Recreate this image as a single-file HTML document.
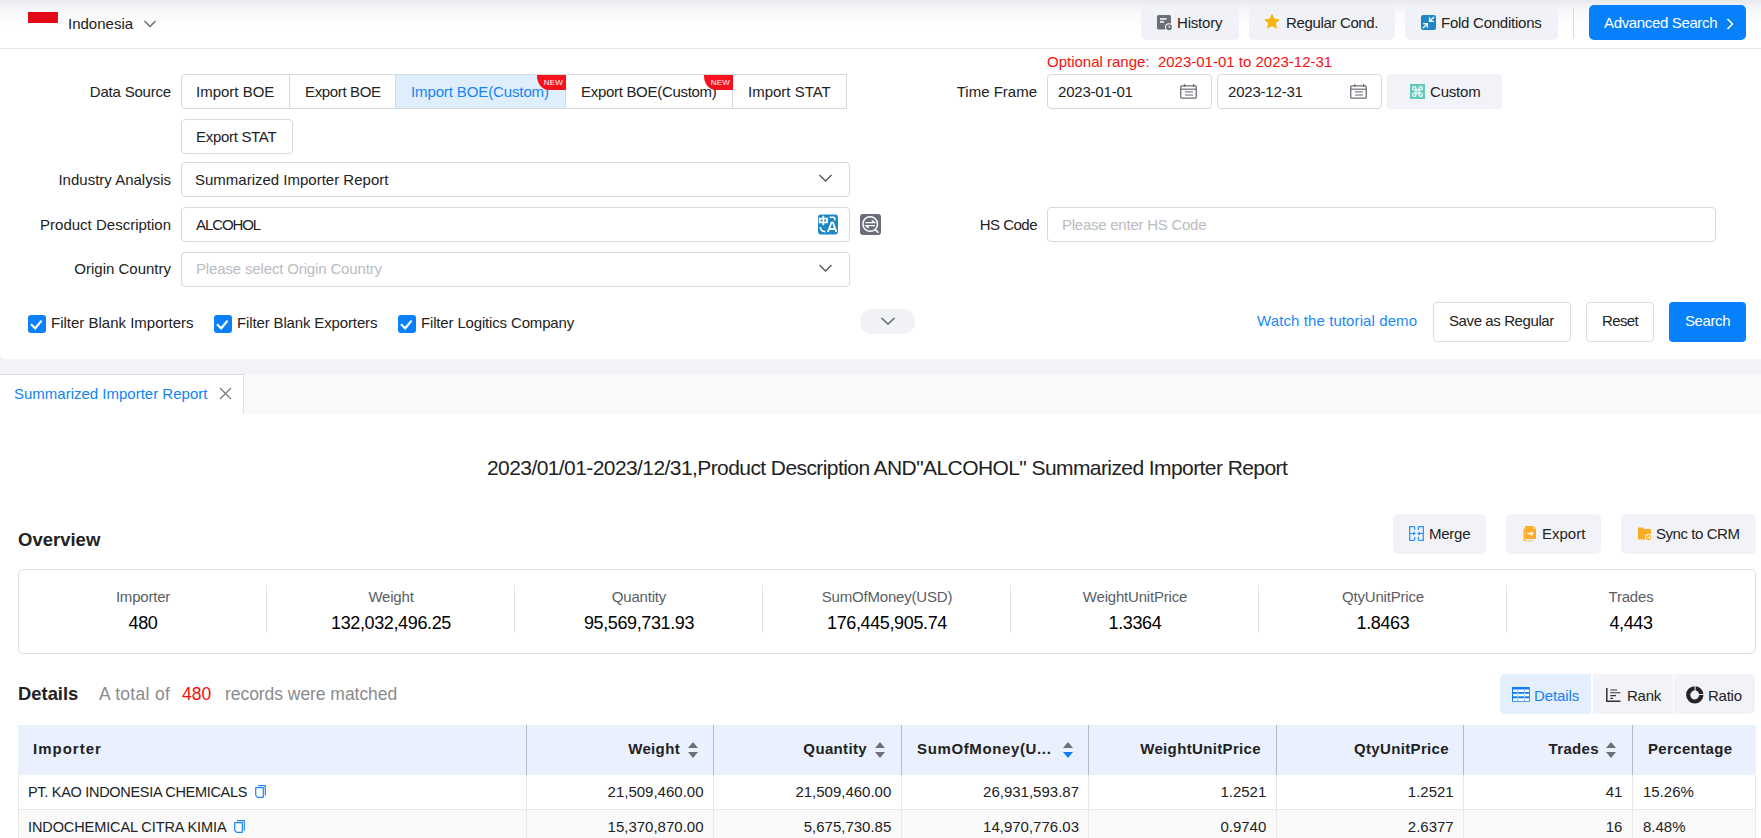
<!DOCTYPE html>
<html><head><meta charset="utf-8">
<style>
*{box-sizing:border-box;margin:0;padding:0}
html,body{width:1761px;height:838px;overflow:hidden;background:#fff;font-family:"Liberation Sans",sans-serif;color:#222}
.a{position:absolute}
.t{position:absolute;white-space:nowrap;line-height:20px;font-size:15px}
#hdr{left:0;top:0;width:1761px;height:49px;background:linear-gradient(#e8e9ed 0px,#f3f4f6 7px,#f9fafb 14px,#fdfdfd 22px,#fff 30px);border-bottom:1px solid #e8e8e8}
.hbtn{position:absolute;top:5px;height:35px;background:#f0f2f7;border-radius:5px}
.btn{position:absolute;border:1px solid #d9dce2;border-radius:4px;background:#fff}
.inp{position:absolute;border:1px solid #d6d9de;border-radius:4px;background:#fff}
.ds{position:absolute;top:74px;height:35px;border:1px solid #d6d9de;background:#fff}
.new{position:absolute;top:0px;right:-1px;width:29px;height:15px;background:#f5121d;border-bottom-left-radius:12px 14px;color:#fff;font-size:8px;line-height:15px;text-align:right;padding-right:3px;letter-spacing:.2px;z-index:2}
.lbl{position:absolute;white-space:nowrap;line-height:20px;font-size:15px;text-align:right;width:200px}
.cb{position:absolute;width:18px;height:18px;background:#0a80fb;border-radius:3px;top:315px}
.gbtn{position:absolute;top:514px;height:40px;background:#f1f3f8;border-radius:5px}
.ov{position:absolute;top:569px;height:85px;left:18px;width:1738px;border:1px solid #dcdfe5;border-radius:5px}
.ovc{position:absolute;top:0;width:248px;height:83px;text-align:center}
.ovd{position:absolute;top:16px;width:1px;height:48px;background:#dfe2e7}
.th{position:absolute;top:725px;height:50px;background:#eaf0fd}
.tl{position:absolute;font-weight:bold;font-size:15px;line-height:20px;top:739px;white-space:nowrap}
.td{position:absolute;font-size:15px;line-height:20px;white-space:nowrap}
.tn{font-size:14.5px;letter-spacing:-.3px}
</style></head><body>

<!-- HEADER -->
<div id="hdr" class="a"></div>
<div class="a" style="left:28px;top:12px;width:30px;height:11px;background:#e20a17"></div>
<div class="t" id="t_indo" style="left:68px;top:14px">Indonesia</div>
<svg class="a" style="left:143px;top:19px" width="14" height="10" viewBox="0 0 14 10"><path d="M1.5 2 L7 7.5 L12.5 2" fill="none" stroke="#666" stroke-width="1.3"/></svg>

<div class="hbtn" style="left:1141px;width:98px"></div>
<div class="hbtn" style="left:1249px;width:146px"></div>
<div class="hbtn" style="left:1405px;width:153px"></div>
<div class="a" style="left:1573px;top:8px;width:1px;height:30px;background:#d8dbe0"></div>
<div class="a" style="left:1589px;top:5px;width:157px;height:35px;background:#0780fc;border-radius:5px"></div>
<div class="t" id="t_hist" style="left:1177px;top:13px;letter-spacing:-.2px">History</div>
<div class="t" id="t_reg" style="left:1286px;top:13px;letter-spacing:-.35px">Regular Cond.</div>
<div class="t" id="t_fold" style="left:1441px;top:13px;letter-spacing:-.25px">Fold Conditions</div>
<div class="t" id="t_adv" style="left:1604px;top:13px;color:#fff;letter-spacing:-.35px">Advanced Search</div>

<!-- FORM -->
<div class="lbl" id="l_ds" style="left:-29px;top:82px;letter-spacing:-.2px">Data Source</div>
<div class="ds" style="left:181px;width:109px;border-radius:4px 0 0 4px"></div>
<div class="ds" style="left:289px;width:107px"></div>
<div class="ds" style="left:395px;width:171px;background:#deeefb;border-color:#d6d9de"><div class="new">NEW</div></div>
<div class="ds" style="left:565px;width:168px"><div class="new">NEW</div></div>
<div class="ds" style="left:732px;width:115px"></div>
<div class="ds" style="left:181px;top:119px;width:112px;border-radius:4px"></div>
<div class="t" id="t_ib" style="left:196px;top:82px">Import BOE</div>
<div class="t" id="t_eb" style="left:305px;top:82px;letter-spacing:-.35px">Export BOE</div>
<div class="t" id="t_ibc" style="left:411px;top:82px;color:#1585f6;letter-spacing:-.12px">Import BOE(Custom)</div>
<div class="t" id="t_ebc" style="left:581px;top:82px;letter-spacing:-.3px">Export BOE(Custom)</div>
<div class="t" id="t_is" style="left:748px;top:82px">Import STAT</div>
<div class="t" id="t_es" style="left:196px;top:127px;letter-spacing:-.3px">Export STAT</div>

<div class="t" id="t_opt" style="left:1047px;top:52px;color:#fa0f0f">Optional range:&nbsp;&nbsp;2023-01-01 to 2023-12-31</div>
<div class="lbl" id="l_tf" style="left:837px;top:82px">Time Frame</div>
<div class="inp" style="left:1047px;top:74px;width:165px;height:35px"></div>
<div class="inp" style="left:1217px;top:74px;width:165px;height:35px"></div>
<div class="t" id="t_d1" style="left:1058px;top:82px;letter-spacing:-.2px">2023-01-01</div>
<div class="t" id="t_d2" style="left:1228px;top:82px;letter-spacing:-.2px">2023-12-31</div>
<div class="a" style="left:1387px;top:74px;width:115px;height:35px;background:#f1f3f8;border-radius:3px"></div>
<div class="t" id="t_cus" style="left:1430px;top:82px;letter-spacing:-.2px">Custom</div>

<div class="lbl" id="l_ia" style="left:-29px;top:170px">Industry Analysis</div>
<div class="inp" style="left:181px;top:162px;width:669px;height:35px"></div>
<div class="t" id="t_ia" style="left:195px;top:170px">Summarized Importer Report</div>
<svg class="a" style="left:818px;top:173px" width="15" height="10" viewBox="0 0 15 10"><path d="M1.5 2 L7.5 8 L13.5 2" fill="none" stroke="#555" stroke-width="1.3"/></svg>

<div class="lbl" id="l_pd" style="left:-29px;top:215px">Product Description</div>
<div class="inp" style="left:181px;top:207px;width:669px;height:35px"></div>
<div class="t" id="t_pd" style="left:196px;top:215px;letter-spacing:-1.1px">ALCOHOL</div>

<div class="lbl" id="l_oc" style="left:-29px;top:259px">Origin Country</div>
<div class="inp" style="left:181px;top:252px;width:669px;height:35px"></div>
<div class="t" id="t_oc" style="left:196px;top:259px;letter-spacing:-.15px;color:#b9bcc2">Please select Origin Country</div>
<svg class="a" style="left:818px;top:263px" width="15" height="10" viewBox="0 0 15 10"><path d="M1.5 2 L7.5 8 L13.5 2" fill="none" stroke="#555" stroke-width="1.3"/></svg>

<div class="lbl" id="l_hs" style="left:837px;top:215px;letter-spacing:-.5px">HS Code</div>
<div class="inp" style="left:1047px;top:207px;width:669px;height:35px"></div>
<div class="t" id="t_hs" style="left:1062px;top:215px;letter-spacing:-.25px;color:#b9bcc2">Please enter HS Code</div>

<div class="cb" style="left:28px"></div>
<div class="cb" style="left:214px"></div>
<div class="cb" style="left:398px"></div>
<div class="t" id="t_cb1" style="left:51px;top:313px">Filter Blank Importers</div>
<div class="t" id="t_cb2" style="left:237px;top:313px;letter-spacing:-.14px">Filter Blank Exporters</div>
<div class="t" id="t_cb3" style="left:421px;top:313px;letter-spacing:-.16px">Filter Logitics Company</div>
<div class="a" style="left:860px;top:309px;width:55px;height:25px;background:#f0f2f6;border-radius:12px"></div>

<div class="t" id="t_watch" style="left:1257px;top:311px;letter-spacing:.1px;color:#1a88fa">Watch the tutorial demo</div>
<div class="btn" style="left:1433px;top:302px;width:138px;height:40px"></div>
<div class="btn" style="left:1586px;top:302px;width:68px;height:40px"></div>
<div class="a" style="left:1669px;top:302px;width:77px;height:40px;background:#0780fc;border-radius:4px"></div>
<div class="t" id="t_save" style="left:1449px;top:311px;letter-spacing:-.4px">Save as Regular</div>
<div class="t" id="t_reset" style="left:1602px;top:311px;letter-spacing:-.6px">Reset</div>
<div class="t" id="t_search" style="left:1685px;top:311px;letter-spacing:-.4px;color:#fff">Search</div>

<!-- BAND / TABS -->
<div class="a" style="left:0;top:359px;width:1761px;height:16px;background:#f1f3f8"></div>
<div class="a" style="left:0;top:352px;width:12px;height:7px;background:#f1f3f8"></div><div class="a" style="left:0;top:349px;width:14px;height:10px;background:#fff;border-bottom-left-radius:5px"></div>
<div class="a" style="left:0;top:374px;width:1761px;height:40px;background:#f9f9f9"></div>
<div class="a" style="left:0;top:374px;width:244px;height:40px;background:#fff;border-top:1px solid #dcdfe4;border-right:1px solid #dcdfe4"></div>
<div class="t" id="t_tab" style="left:14px;top:384px;color:#0f84f8">Summarized Importer Report</div>

<!-- REPORT -->
<div class="t" id="t_title" style="left:487px;top:456px;font-size:21px;line-height:24px;letter-spacing:-.58px">2023/01/01-2023/12/31,Product Description AND"ALCOHOL" Summarized Importer Report</div>
<div class="t" id="t_ovw" style="left:18px;top:529px;font-size:18.5px;line-height:22px;font-weight:bold">Overview</div>
<div class="gbtn" style="left:1393px;width:93px"></div>
<div class="gbtn" style="left:1506px;width:95px"></div>
<div class="gbtn" style="left:1621px;width:135px"></div>
<div class="t" id="t_merge" style="left:1429px;top:524px;letter-spacing:-.26px">Merge</div>
<div class="t" id="t_export" style="left:1542px;top:524px">Export</div>
<div class="t" id="t_sync" style="left:1656px;top:524px;letter-spacing:-.44px">Sync to CRM</div>

<div class="ov"></div>
<div class="t" style="left:19px;width:248px;text-align:center;top:587px;color:#5a5e65;letter-spacing:-.2px">Importer</div>
<div class="t" style="left:19px;width:248px;text-align:center;top:613px;font-size:18px;letter-spacing:-.38px;color:#000">480</div>
<div class="t" style="left:267px;width:248px;text-align:center;top:587px;color:#5a5e65;letter-spacing:-.2px">Weight</div>
<div class="t" style="left:267px;width:248px;text-align:center;top:613px;font-size:18px;letter-spacing:-.38px;color:#000">132,032,496.25</div>
<div class="ovd" style="left:266px;top:585px"></div>
<div class="t" style="left:515px;width:248px;text-align:center;top:587px;color:#5a5e65;letter-spacing:-.2px">Quantity</div>
<div class="t" style="left:515px;width:248px;text-align:center;top:613px;font-size:18px;letter-spacing:-.38px;color:#000">95,569,731.93</div>
<div class="ovd" style="left:514px;top:585px"></div>
<div class="t" style="left:763px;width:248px;text-align:center;top:587px;color:#5a5e65;letter-spacing:-.2px">SumOfMoney(USD)</div>
<div class="t" style="left:763px;width:248px;text-align:center;top:613px;font-size:18px;letter-spacing:-.38px;color:#000">176,445,905.74</div>
<div class="ovd" style="left:762px;top:585px"></div>
<div class="t" style="left:1011px;width:248px;text-align:center;top:587px;color:#5a5e65;letter-spacing:-.2px">WeightUnitPrice</div>
<div class="t" style="left:1011px;width:248px;text-align:center;top:613px;font-size:18px;letter-spacing:-.38px;color:#000">1.3364</div>
<div class="ovd" style="left:1010px;top:585px"></div>
<div class="t" style="left:1259px;width:248px;text-align:center;top:587px;color:#5a5e65;letter-spacing:-.2px">QtyUnitPrice</div>
<div class="t" style="left:1259px;width:248px;text-align:center;top:613px;font-size:18px;letter-spacing:-.38px;color:#000">1.8463</div>
<div class="ovd" style="left:1258px;top:585px"></div>
<div class="t" style="left:1507px;width:248px;text-align:center;top:587px;color:#5a5e65;letter-spacing:-.2px">Trades</div>
<div class="t" style="left:1507px;width:248px;text-align:center;top:613px;font-size:18px;letter-spacing:-.38px;color:#000">4,443</div>
<div class="ovd" style="left:1506px;top:585px"></div>

<div class="t" id="t_det" style="left:18px;top:683px;font-size:18.4px;line-height:22px;font-weight:bold">Details</div>
<div class="t" id="t_tot" style="left:99px;top:683px;font-size:17.5px;line-height:22px;color:#8a8b8e;letter-spacing:.3px">A total of</div>
<div class="t" id="t_480" style="left:182px;top:683px;font-size:17.5px;line-height:22px;color:#fa0a0a">480</div>
<div class="t" id="t_rec" style="left:225px;top:683px;font-size:17.5px;line-height:22px;color:#8a8b8e;letter-spacing:-.05px">records were matched</div>

<div class="a" style="left:1500px;top:674px;width:91px;height:40px;background:#e3effc;border-radius:5px 0 0 5px"></div>
<div class="a" style="left:1593px;top:674px;width:80px;height:40px;background:#f1f3f8"></div>
<div class="a" style="left:1674px;top:674px;width:81px;height:40px;background:#f1f3f8;border-radius:0 5px 5px 0"></div>
<div class="t" id="t_dd" style="left:1534px;top:686px;letter-spacing:-.11px;color:#1a80f0">Details</div>
<div class="t" id="t_rank" style="left:1627px;top:686px;letter-spacing:-.25px">Rank</div>
<div class="t" id="t_ratio" style="left:1708px;top:686px;letter-spacing:-.24px">Ratio</div>

<!-- TABLE -->
<div class="a" style="left:18px;top:725px;width:1738px;height:50px;background:#eaf0fd"></div>
<div class="a" style="left:18px;top:810px;width:1738px;height:28px;background:#fafafa"></div>
<div class="a" style="left:18px;top:809px;width:1738px;height:1px;background:#e8e8e8"></div>
<div class="a" style="left:18px;top:775px;width:1px;height:63px;background:#e8e8e8"></div>
<div class="a" style="left:1755px;top:775px;width:1px;height:63px;background:#e8e8e8"></div>
<div class="a" style="left:526px;top:725px;width:1px;height:50px;background:#b6bac4"></div>
<div class="a" style="left:526px;top:775px;width:1px;height:63px;background:#e8e8e8"></div>
<div class="a" style="left:713px;top:725px;width:1px;height:50px;background:#b6bac4"></div>
<div class="a" style="left:713px;top:775px;width:1px;height:63px;background:#e8e8e8"></div>
<div class="a" style="left:901px;top:725px;width:1px;height:50px;background:#b6bac4"></div>
<div class="a" style="left:901px;top:775px;width:1px;height:63px;background:#e8e8e8"></div>
<div class="a" style="left:1088px;top:725px;width:1px;height:50px;background:#b6bac4"></div>
<div class="a" style="left:1088px;top:775px;width:1px;height:63px;background:#e8e8e8"></div>
<div class="a" style="left:1276px;top:725px;width:1px;height:50px;background:#b6bac4"></div>
<div class="a" style="left:1276px;top:775px;width:1px;height:63px;background:#e8e8e8"></div>
<div class="a" style="left:1463px;top:725px;width:1px;height:50px;background:#b6bac4"></div>
<div class="a" style="left:1463px;top:775px;width:1px;height:63px;background:#e8e8e8"></div>
<div class="a" style="left:1632px;top:725px;width:1px;height:50px;background:#b6bac4"></div>
<div class="a" style="left:1632px;top:775px;width:1px;height:63px;background:#e8e8e8"></div>
<div class="tl" style="left:33px;letter-spacing:1px">Importer</div>
<div class="tl" style="right:1081px;letter-spacing:.35px">Weight</div>
<div class="tl" style="right:894px;letter-spacing:.35px">Quantity</div>
<div class="tl" style="left:917px;letter-spacing:.63px">SumOfMoney(U...</div>
<div class="tl" style="right:500px;letter-spacing:.35px">WeightUnitPrice</div>
<div class="tl" style="right:312px;letter-spacing:.35px">QtyUnitPrice</div>
<div class="tl" style="right:162px;letter-spacing:.35px">Trades</div>
<div class="tl" style="left:1648px;letter-spacing:.35px">Percentage</div>
<div class="td tn" style="left:28px;top:782px">PT. KAO INDONESIA CHEMICALS</div>
<div class="td" style="right:1057.5px;top:782px">21,509,460.00</div>
<div class="td" style="right:869.7px;top:782px">21,509,460.00</div>
<div class="td" style="right:682.0px;top:782px">26,931,593.87</div>
<div class="td" style="right:494.7px;top:782px">1.2521</div>
<div class="td" style="right:307.3px;top:782px">1.2521</div>
<div class="td" style="right:138.7px;top:782px">41</div>
<div class="td" style="left:1643px;top:782px">15.26%</div>
<div class="td tn" style="left:28px;top:817px;letter-spacing:-.1px">INDOCHEMICAL CITRA KIMIA</div>
<div class="td" style="right:1057.5px;top:817px">15,370,870.00</div>
<div class="td" style="right:869.7px;top:817px">5,675,730.85</div>
<div class="td" style="right:682.0px;top:817px">14,970,776.03</div>
<div class="td" style="right:494.7px;top:817px">0.9740</div>
<div class="td" style="right:307.3px;top:817px">2.6377</div>
<div class="td" style="right:138.7px;top:817px">16</div>
<div class="td" style="left:1643px;top:817px">8.48%</div>

<!-- ICONS -->
<svg class="a" style="left:1157px;top:15px" width="16" height="16" viewBox="0 0 16 16">
<rect x="0" y="0" width="14" height="14.5" rx="1.5" fill="#6b6e76"/>
<rect x="3" y="3.2" width="6.5" height="1.5" fill="#fff"/><rect x="3" y="6.2" width="4" height="1.5" fill="#fff"/>
<circle cx="12" cy="12.2" r="4" fill="#fff"/><circle cx="12" cy="12.2" r="3" fill="#6b6e76"/>
<path d="M12 10.4 V12.4 H13.4" stroke="#fff" stroke-width="0.9" fill="none"/>
</svg>
<svg class="a" style="left:1264px;top:14px" width="16" height="16" viewBox="0 0 16 16">
<path d="M8 0.6 L10.1 5.2 L15.1 5.7 L11.3 9.1 L12.4 14.1 L8 11.5 L3.6 14.1 L4.7 9.1 L0.9 5.7 L5.9 5.2 Z" fill="#f5b50b" stroke="#f5b50b" stroke-width="1" stroke-linejoin="round"/>
</svg>
<svg class="a" style="left:1421px;top:15px" width="15" height="15" viewBox="0 0 15 15">
<rect x="0" y="0" width="15" height="15" rx="2" fill="#1f87c3"/>
<path d="M13 2 L8.8 6.2 M8.6 2.2 V6.4 H12.8" stroke="#fff" stroke-width="1.3" fill="none"/>
<path d="M2 13 L6.2 8.8 M2.2 8.6 H6.4 V12.8" stroke="#fff" stroke-width="1.3" fill="none"/>
</svg>
<svg class="a" style="left:1725px;top:17px" width="10" height="14" viewBox="0 0 10 14"><path d="M2.5 2 L7.5 7 L2.5 12" stroke="#fff" stroke-width="1.6" fill="none"/></svg>

<svg class="a" style="left:1180px;top:84px" width="17" height="15" viewBox="0 0 17 15">
<rect x="0.75" y="1.9" width="15.5" height="12.3" rx="1" fill="none" stroke="#6c6f76" stroke-width="1.3"/>
<rect x="0.75" y="4.6" width="15.5" height="1.2" fill="#6c6f76"/>
<rect x="4.2" y="0" width="1.2" height="3" fill="#6c6f76"/><rect x="13" y="0" width="1.2" height="3" fill="#6c6f76"/>
<rect x="5" y="7.3" width="8" height="1.1" fill="#6c6f76"/><rect x="5" y="10.4" width="8" height="1.3" fill="#8a8d93"/>
</svg>
<svg class="a" style="left:1350px;top:84px" width="17" height="15" viewBox="0 0 17 15">
<rect x="0.75" y="1.9" width="15.5" height="12.3" rx="1" fill="none" stroke="#6c6f76" stroke-width="1.3"/>
<rect x="0.75" y="4.6" width="15.5" height="1.2" fill="#6c6f76"/>
<rect x="4.2" y="0" width="1.2" height="3" fill="#6c6f76"/><rect x="13" y="0" width="1.2" height="3" fill="#6c6f76"/>
<rect x="5" y="7.3" width="8" height="1.1" fill="#6c6f76"/><rect x="5" y="10.4" width="8" height="1.3" fill="#8a8d93"/>
</svg>
<svg class="a" style="left:1410px;top:84px" width="15" height="15" viewBox="0 0 15 15">
<rect width="15" height="15" fill="#63c9ba"/>
<g fill="none" stroke="#fff" stroke-width="1.1"><circle cx="4.3" cy="4.3" r="1.7"/><circle cx="10.7" cy="4.3" r="1.7"/><circle cx="4.3" cy="10.7" r="1.7"/><circle cx="10.7" cy="10.7" r="1.7"/>
<path d="M4.3 6 V6 M6 4.3 V10.7 M9 4.3 V10.7 M4.3 6 H10.7 M4.3 9 H10.7"/></g>
</svg>

<svg class="a" style="left:818px;top:214px" width="21" height="21" viewBox="0 0 21 21">
<rect x="0" y="0.5" width="20" height="20" rx="3" fill="#1e88c7"/>
<path d="M1.7 4.6 H9 V8.3 H1.7 Z M5.35 1.7 V11.2" stroke="#fff" stroke-width="1.8" fill="none"/>
<path d="M11.6 3.2 H15.3 Q16.9 3.3 17 6.4" stroke="#fff" stroke-width="1.6" fill="none"/>
<path d="M2.4 13 Q2.2 17.6 7.4 17.6" stroke="#fff" stroke-width="1.6" fill="none"/>
<path d="M9.9 18 L13.5 8.6 H14.9 L18.5 18 M11.2 15 H17.2" stroke="#fff" stroke-width="1.8" fill="none"/>
</svg>
<svg class="a" style="left:860px;top:214px" width="21" height="21" viewBox="0 0 21 21">
<rect x="0" y="0" width="21" height="21" rx="3" fill="#6b6e78"/>
<circle cx="10.2" cy="10" r="7.3" fill="none" stroke="#fff" stroke-width="1.5"/>
<path d="M15.4 15.6 L18.5 18.7" stroke="#fff" stroke-width="1.6"/>
<path d="M5.5 8.6 H14.5 L11.8 6.3" stroke="#fff" stroke-width="1.4" fill="none"/>
<path d="M15 11.6 H6 L8.7 13.9" stroke="#fff" stroke-width="1.4" fill="none"/>
</svg>
<svg class="a" style="left:28px;top:315px" width="18" height="18" viewBox="0 0 18 18"><path d="M3 9.2 L7.2 13.3 L13.6 5.6" stroke="#fff" stroke-width="2.2" fill="none"/></svg>
<svg class="a" style="left:214px;top:315px" width="18" height="18" viewBox="0 0 18 18"><path d="M3 9.2 L7.2 13.3 L13.6 5.6" stroke="#fff" stroke-width="2.2" fill="none"/></svg>
<svg class="a" style="left:398px;top:315px" width="18" height="18" viewBox="0 0 18 18"><path d="M3 9.2 L7.2 13.3 L13.6 5.6" stroke="#fff" stroke-width="2.2" fill="none"/></svg>

<svg class="a" style="left:880px;top:316px" width="16" height="10" viewBox="0 0 16 10"><path d="M1.5 2 L8 8 L14.5 2" stroke="#5c5f66" stroke-width="1.3" fill="none"/></svg>
<svg class="a" style="left:219px;top:387px" width="13" height="13" viewBox="0 0 13 13"><path d="M1 1 L12 12 M12 1 L1 12" stroke="#7a7a7a" stroke-width="1.3" fill="none"/></svg>

<svg class="a" style="left:1409px;top:526px" width="16" height="16" viewBox="0 0 16 16">
<path d="M5.6 0.7 H0.7 V14.3 H5.6 M5.6 0.7 V4 M5.6 14.3 V11" stroke="#2f95fa" stroke-width="1.3" fill="none"/>
<path d="M9.4 0.7 H14.3 V14.3 H9.4 M9.4 0.7 V4 M9.4 14.3 V11" stroke="#2f95fa" stroke-width="1.3" fill="none"/>
<path d="M1 7.5 H5.8 M4.2 6 L6 7.5 L4.2 9 M14 7.5 H9.2 M10.8 6 L9 7.5 L10.8 9" stroke="#2f95fa" stroke-width="1.2" fill="none"/>
</svg>
<svg class="a" style="left:1523px;top:526px" width="14" height="16" viewBox="0 0 14 16">
<path d="M0.6 2.5 V15.3 H10 V14.5 H2 V2.5 Z" fill="#fbab2a"/>
<path d="M2.2 0 H10.5 L13 2.5 V13 H2.2 Z" fill="#fbab2a"/>
<path d="M10.5 0.2 V2.5 H12.8" fill="none" stroke="#fde3b5" stroke-width="0.7"/>
<path d="M4.5 7.5 H9.5 M7.8 5.7 L9.8 7.5 L7.8 9.3" stroke="#fff" stroke-width="1.4" fill="none"/>
</svg>
<svg class="a" style="left:1638px;top:527px" width="14" height="14" viewBox="0 0 14 14">
<path d="M0 0.5 H4.8 L6.2 2 H13 V12.5 H0 Z" fill="#fbab2a"/>
<circle cx="10.6" cy="10.5" r="3.3" fill="#fbab2a" stroke="#fff" stroke-width="1"/>
<path d="M9 10.5 H12.2 M11 9.3 L12.3 10.5 L11 11.7" stroke="#fff" stroke-width="1" fill="none"/>
</svg>

<svg class="a" style="left:1512px;top:687px" width="18" height="15" viewBox="0 0 18 15">
<rect x="0" y="0" width="17.8" height="14.7" fill="#0d7ef5"/>
<g fill="#fff"><rect x="1" y="2.5" width="16" height="2.5"/><rect x="1" y="6.8" width="16" height="2.5"/><rect x="1" y="11.3" width="16" height="2.6"/></g>
<g fill="#9cc8f9"><rect x="5.2" y="2.5" width="1.2" height="11.4"/><rect x="12" y="2.5" width="1" height="11.4"/></g>
</svg>
<svg class="a" style="left:1606px;top:688px" width="15" height="14" viewBox="0 0 15 14">
<path d="M0.8 0 V13.2 H14.5" stroke="#333" stroke-width="1.5" fill="none"/>
<path d="M4.3 2 H11 M4.3 4.8 H14.3 M4.3 7.6 H10 M4.3 10.4 H7" stroke="#333" stroke-width="1.1" fill="none"/>
</svg>
<svg class="a" style="left:1686px;top:686px" width="18" height="18" viewBox="0 0 18 18">
<path d="M9.6 0.2 A8.7 8.7 0 0 1 17.5 8.0 L13.1 8.0 A4.4 4.4 0 0 0 9.6 4.6 Z" fill="#252525"/>
<path d="M17.5 9.0 A8.7 8.7 0 1 1 8.6 0.2 L8.6 4.6 A4.4 4.4 0 1 0 13.1 9.0 Z" fill="#252525"/>
</svg>
<svg class="a" style="left:688px;top:742px" width="10" height="16" viewBox="0 0 10 16"><path d="M0 6 L5 0 L10 6 Z" fill="#6e7079"/><path d="M0 10 L10 10 L5 16 Z" fill="#6e7079"/></svg>
<svg class="a" style="left:875px;top:742px" width="10" height="16" viewBox="0 0 10 16"><path d="M0 6 L5 0 L10 6 Z" fill="#6e7079"/><path d="M0 10 L10 10 L5 16 Z" fill="#6e7079"/></svg>
<svg class="a" style="left:1063px;top:742px" width="10" height="16" viewBox="0 0 10 16"><path d="M0 6 L5 0 L10 6 Z" fill="#6e7079"/><path d="M0 10 L10 10 L5 16 Z" fill="#0a7ff5"/></svg>
<svg class="a" style="left:1606px;top:742px" width="10" height="16" viewBox="0 0 10 16"><path d="M0 6 L5 0 L10 6 Z" fill="#6e7079"/><path d="M0 10 L10 10 L5 16 Z" fill="#6e7079"/></svg>
<svg class="a" style="left:255px;top:785px" width="11" height="13" viewBox="0 0 11 13"><path d="M3 0.7 H10.3 V10.5" stroke="#1f86f6" stroke-width="1.2" fill="none"/><path d="M0.7 2.6 H8.3 V12.3 H2.6 L0.7 10.4 Z" stroke="#1f86f6" stroke-width="1.2" fill="none" stroke-linejoin="round"/></svg>
<svg class="a" style="left:234px;top:820px" width="11" height="13" viewBox="0 0 11 13"><path d="M3 0.7 H10.3 V10.5" stroke="#1f86f6" stroke-width="1.2" fill="none"/><path d="M0.7 2.6 H8.3 V12.3 H2.6 L0.7 10.4 Z" stroke="#1f86f6" stroke-width="1.2" fill="none" stroke-linejoin="round"/></svg>
</body></html>
